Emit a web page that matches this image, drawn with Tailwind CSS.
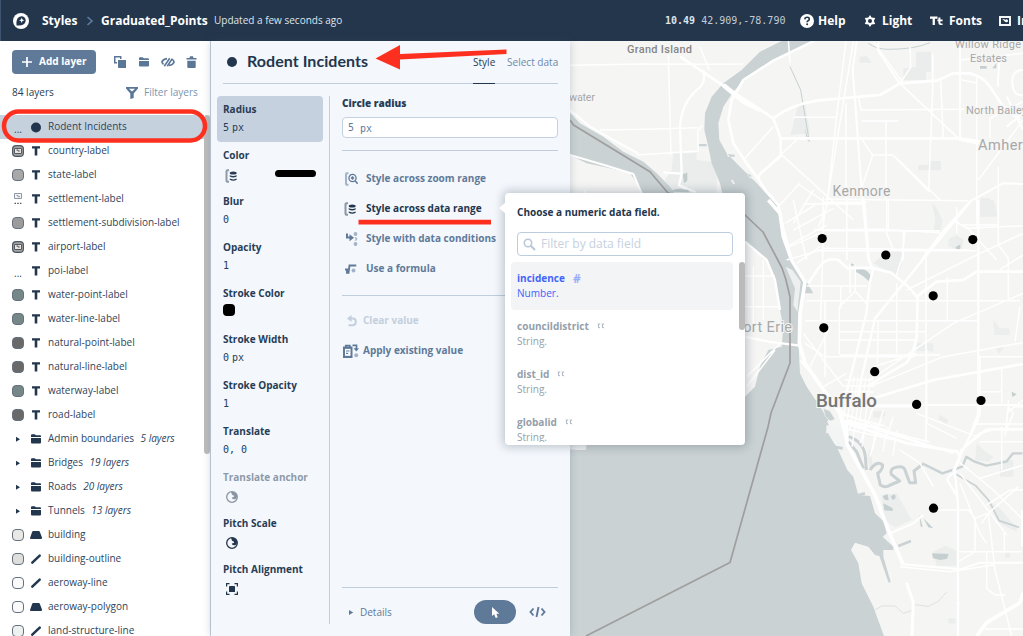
<!DOCTYPE html>
<html lang="en">
<head>
<meta charset="utf-8">
<title>Graduated_Points</title>
<script src="https://cdn.jsdelivr.net/npm/@tailwindcss/browser@4"></script>
</head>
<body class="w-[1023px] h-[636px] overflow-hidden font-['Open_Sans',sans-serif] text-[10.05px] text-[#273d56] bg-white relative">

<svg class="hidden">
  <symbol id="t" viewBox="0 0 12 12"><path d="M2 1.300h8v2.300H7.300V10.500H4.700V3.600H2z" fill="#22364d"/></symbol>
  <symbol id="folder" viewBox="0 0 12 12"><path d="M1 2.200a1 1 0 0 1 1-1h2.800l1 1H10a1 1 0 0 1 1 1V4H1zM1 5h10v4.500a1 1 0 0 1-1 1H2a1 1 0 0 1-1-1z"/></symbol>
  <symbol id="poly" viewBox="0 0 12 12"><path d="M3.300 2h5.400q.7 0 1 .6L12 8.500q.2 1.500-1 1.500H1Q-.2 10 .2 8.500L2.300 2.600q.3-.6 1-.6z" fill="#22364d"/></symbol>
  <symbol id="line" viewBox="0 0 12 12"><path d="M2.300 9.700 9.700 2.700" stroke="#22364d" stroke-width="2.500" stroke-linecap="round"/></symbol>
  <symbol id="tri" viewBox="0 0 6 6"><path d="M1 .5v5L5.200 3z"/></symbol>
  <symbol id="pic" viewBox="0 0 12 12"><rect x=".6" y=".6" width="10.800" height="10.800" rx="3.500" fill="#a2a2a2" stroke="#4c5866" stroke-width="1.200"/><path d="M2.500 3.500h7v5h-7z" fill="#e4e4e4" stroke="#5a5a5a" stroke-width="1"/><path d="M4.500 5h1.500v1h1.700" fill="none" stroke="#555"/></symbol>
  <symbol id="quote" viewBox="0 0 8 6"><path d="M.8 1h2.400M4.800 1h2.400M1.500 1v3q0 .8 1.400.6M5.500 1v3q0 .8 1.400.6" fill="none" stroke="#b3bac4" stroke-width="1.200"/></symbol>
  <symbol id="db" viewBox="0 0 12 14"><path d="M4 1.200H2.500q-1 0-1 1v9.600q0 1 1 1H4" fill="none" stroke="currentColor" stroke-opacity=".5" stroke-width="2"/><ellipse cx="8.200" cy="4" rx="3.500" ry="1.600" fill="currentColor"/><path d="M4.700 6.300q3.500 1.600 7 0v1.200q-3.500 2-7 0zM4.700 9.600q3.500 1.600 7 0v1.200q-3.500 2-7 0z" fill="currentColor"/></symbol>
  <symbol id="globe" viewBox="0 0 12 12"><circle cx="6" cy="6" r="5.300" fill="none" stroke="currentColor" stroke-width="1.300"/><path d="M5 .8Q10 0 11.300 4.500L10.500 7.500 9 8.300Q6 8.600 5.800 6.500L7.800 6 8 4.800 6 3.800z" fill="currentColor"/></symbol>
</svg>

<div class="flex flex-col w-full h-full">
  <!-- top bar -->
  <header class="h-[41px] shrink-0 bg-[#24364c] flex items-center pl-3 text-white overflow-hidden whitespace-nowrap border-l border-[#3f5470] [&>*]:shrink-0">
    <svg class="w-4 h-4" viewBox="0 0 16 16"><circle cx="8" cy="8" r="8" fill="#fff"/><path d="M3.500 12.500Q2.600 3.800 8.500 3.200A4.200 4.200 0 0 1 12.700 7.500Q12.200 13.400 3.500 12.500z" fill="#24364c"/><path d="m8.700 4.700.8 1.800 1.800.8-1.800.8-.8 1.800-.8-1.800-1.800-.8 1.800-.8z" fill="#fff"/></svg>
    <span class="ml-[13px] w-[36px] font-bold text-[12px] leading-4">Styles</span>
    <svg class="w-[8px] h-[10px] ml-[8px]" viewBox="0 0 8 10"><path d="M1.500 1 6 5 1.500 9" fill="none" stroke="#5f7c9e" stroke-width="1.600"/></svg>
    <span class="ml-[7px] w-[106px] font-bold text-[12px] leading-4">Graduated_Points</span>
    <span class="ml-[7px] w-[451px] text-[10px] text-[#dfe5ec]">Updated a few seconds ago</span>
    <span class="font-['DejaVu_Sans_Mono',monospace] text-[10px] text-[#c3ccd6] w-[135px]"><b class="text-[#dde3ea]">10.49</b> 42.909,-78.790</span>
    <svg class="w-[14px] h-[14px]" viewBox="0 0 14 14"><circle cx="7" cy="7" r="7" fill="#fff"/><path d="M4.800 5.300q.2-2 2.300-2t2.200 1.700q0 1.100-1.200 1.700Q7.100 7.200 7.100 8.300" fill="none" stroke="#24364c" stroke-width="1.600"/><circle cx="7.100" cy="10.300" r="1" fill="#24364c"/></svg>
    <b class="ml-[4px] w-[46px] text-[12px]">Help</b>
    <svg class="w-[12px] h-[12px]" viewBox="0 0 12 12"><path d="m6 0 1.600 2.500L11.200 3 9.900 6l1.300 3-3.600.5L6 12 4.400 9.500.8 9l1.300-3L.8 3l3.600-.5z" fill="#fff"/><circle cx="6" cy="6" r="2" fill="#24364c"/></svg>
    <b class="ml-[6px] w-[48px] text-[12px]">Light</b>
    <svg class="w-[13px] h-[12px]" viewBox="0 0 13 12"><path d="M0 1.500h7.500v2.300H4.900V10H2.600V3.800H0zM8.400 2.500h2v2h2.200v1.700h-2.200v1.600q0 .6.700.6h1.500V10h-2q-2.200 0-2.200-2.100V6.200h-1V4.500h1z" fill="#fff"/></svg>
    <b class="ml-[6px] w-[50px] text-[12px]">Fonts</b>
    <svg class="w-[12px] h-[12px]" viewBox="0 0 12 12"><rect x="1" y="2" width="10" height="8" fill="none" stroke="#fff" stroke-width="1.900"/><path d="M3.700 4.700h1.800v1.300h1.500" fill="none" stroke="#fff"/><circle cx="7.500" cy="5.800" r="1.500" fill="#fff"/></svg>
    <b class="ml-[6px] text-[12px]">Images</b>
  </header>

  <div class="flex flex-1 min-h-0">
    <!-- layer list -->
    <aside class="w-[211px] shrink-0 bg-white border-r border-[#c3d0e0] flex flex-col overflow-hidden whitespace-nowrap">
      <div class="flex items-center pl-3 mt-[9px] h-6 text-[#5a7797] fill-[#5a7797]">
        <div class="w-[84px] h-6 bg-[#5f7a99] rounded text-white font-bold flex items-center pl-[10px]">
          <svg class="w-[10px] h-[10px] mr-[7px]" viewBox="0 0 10 10"><path d="M5 0v10M0 5h10" stroke="#fff" stroke-width="1.700"/></svg>Add layer
        </div>
        <svg class="w-3 h-3 ml-[18px]" viewBox="0 0 12 12"><path d="M0 0h7.500v3H6V1.500H1.500V6H3v1.500H0z"/><path d="M4 4h8v8H5q-1 0-1-1z"/></svg>
        <svg class="w-3 h-3 ml-[12px]"><use href="#folder"/></svg>
        <svg class="w-[14px] h-3 ml-[11px]" viewBox="0 0 14 12"><path d="M6 2.600Q2 3 .9 6q.5 1.400 1.600 2.300M8 9.500Q12 9 13.100 6 12.600 4.600 11.500 3.700M3.300 10.200l5.400-8M6.300 10.200l5-7.600" fill="none" stroke="#5a7797" stroke-width="1.600"/></svg>
        <svg class="w-[11px] h-3 ml-[11px]" viewBox="0 0 11 12"><path d="M.5 2h3L4 .3h3L7.500 2h3v1.600H.5zM1.300 4.700h8.400V11q0 1-1 1H2.300q-1 0-1-1z"/></svg>
      </div>
      <div class="flex items-center pl-3 h-[41px] -mt-[2px]">
        <span class="w-[114px]">84 layers</span>
        <svg class="w-3 h-3 mr-[6px]" viewBox="0 0 12 12"><path d="M0 0h12v1.500L7.700 6.500V11l-3.400 1V6.500L0 1.500z" fill="#5a7797"/><path d="M3 1.800h6L6 4.500z" fill="#fff"/></svg>
        <span class="text-[#7c94af]">Filter layers</span>
      </div>
      <div class="flex flex-1 min-h-0 mt-[1.500px]">
        <ul class="w-[204px] flex flex-col text-[10px] text-[#2f445c] [&>li]:h-6 [&>li]:shrink-0 [&>li]:flex [&>li]:items-center [&>li]:pl-3 [&_svg]:w-3 [&_svg]:h-3 [&_svg]:mr-[6px] [&_svg]:fill-[#22364d] [&_i.s]:w-3 [&_i.s]:h-3 [&_i.s]:mr-[6px] [&_i.s]:rounded-[4px] [&_i.s]:border [&_i.s]:border-[#66717d] [&_em]:ml-[6.500px] [&_u]:w-[18px] [&_u]:pl-[2px] [&_u]:pt-[5px] [&_u]:no-underline">
          <li class="bg-[#c6d1de]"><u>...</u><svg viewBox="0 0 12 12"><circle cx="6" cy="6.500" r="5"/></svg>Rodent Incidents</li>
          <li><svg><use href="#pic"/></svg><svg><use href="#t"/></svg>country-label</li>
          <li><i class="s bg-[#a8a8a8]"></i><svg><use href="#t"/></svg>state-label</li>
          <li><svg viewBox="0 0 12 12"><path d="M2.500.5h7v5h-7z" fill="#f4f4f4" stroke="#8c97a6"/><path d="M4.500 2.500h1.500v1.200h2" stroke="#8c97a6" fill="none"/><path d="M2.500 10.300h1.500m1.200 0h1.500m1.200 0h1.500" stroke="#4c5866" stroke-width="1.200"/></svg><svg><use href="#t"/></svg>settlement-label</li>
          <li><i class="s bg-[#9b9b9b]"></i><svg><use href="#t"/></svg>settlement-subdivision-label</li>
          <li><svg><use href="#pic"/></svg><svg><use href="#t"/></svg>airport-label</li>
          <li><u>...</u><svg><use href="#t"/></svg>poi-label</li>
          <li><i class="s bg-[#76878a]"></i><svg><use href="#t"/></svg>water-point-label</li>
          <li><i class="s bg-[#76878a]"></i><svg><use href="#t"/></svg>water-line-label</li>
          <li><i class="s bg-[#696969]"></i><svg><use href="#t"/></svg>natural-point-label</li>
          <li><i class="s bg-[#696969]"></i><svg><use href="#t"/></svg>natural-line-label</li>
          <li><i class="s bg-[#76878a]"></i><svg><use href="#t"/></svg>waterway-label</li>
          <li><i class="s bg-[#696969]"></i><svg><use href="#t"/></svg>road-label</li>
          <li><svg viewBox="0 0 12 12"><path d="M4 3.700v5l4-2.500z"/></svg><svg><use href="#folder"/></svg>Admin boundaries<em>5 layers</em></li>
          <li><svg viewBox="0 0 12 12"><path d="M4 3.700v5l4-2.500z"/></svg><svg><use href="#folder"/></svg>Bridges<em>19 layers</em></li>
          <li><svg viewBox="0 0 12 12"><path d="M4 3.700v5l4-2.500z"/></svg><svg><use href="#folder"/></svg>Roads<em>20 layers</em></li>
          <li><svg viewBox="0 0 12 12"><path d="M4 3.700v5l4-2.500z"/></svg><svg><use href="#folder"/></svg>Tunnels<em>13 layers</em></li>
          <li><i class="s bg-[#e8e8e7]"></i><svg><use href="#poly"/></svg>building</li>
          <li><i class="s bg-[#dededc]"></i><svg><use href="#line"/></svg>building-outline</li>
          <li><i class="s bg-[#fafafa]"></i><svg><use href="#line"/></svg>aeroway-line</li>
          <li><i class="s bg-[#fafafa]"></i><svg><use href="#poly"/></svg>aeroway-polygon</li>
          <li><i class="s bg-[#edf1f0]"></i><svg><use href="#line"/></svg>land-structure-line</li>
        </ul>
        <div class="w-[6px] h-[339px] bg-[#bdbdbd] rounded-[3px]"></div>
      </div>
    </aside>

    <!-- property panel -->
    <section class="w-[359px] shrink-0 bg-[#f4f7fc] flex flex-col whitespace-nowrap z-10 shadow-[0_0_8px_rgba(60,80,100,0.25)]">
      <div class="ml-3 mr-3 h-[43px] border-b border-[#bfcddc] flex items-center [&>*]:shrink-0">
        <i class="w-[10px] h-[10px] rounded-full bg-[#22364d] ml-1 mr-[10px]"></i>
        <span class="font-[Lato,sans-serif] font-bold text-[16px] text-[#22364d] w-[226px] -mt-[2px] tracking-[0.050px]">Rodent Incidents</span>
        <span class="h-[43px] mt-px border-b border-[#22364d] leading-[42px] w-[22px]">Style</span>
        <span class="ml-3 mt-[2px] text-[#6f89a8]">Select data</span>
      </div>
      <div class="flex pt-3 h-[540px]">
        <div class="ml-[6px] w-[113px] border-r border-[#c3cfdd] flex flex-col [&>div]:w-[106px] [&>div]:h-[46px] [&>div]:pl-[6px] [&>div]:pt-[6px] [&_b]:block [&_b]:leading-[14px] [&_b]:text-[10px] [&_b]:text-[#273d56] [&_p]:h-[22px] [&_p]:flex [&_p]:items-center [&_p]:font-['DejaVu_Sans_Mono',monospace] [&_p]:text-[10px]">
          <div class="bg-[#c6d1df] rounded"><b>Radius</b><p>5<span class="ml-[3px]">px</span></p></div>
          <div><b>Color</b><p><svg class="w-3 h-[14px] ml-[2px] mt-[6px]"><use href="#db"/></svg><i class="w-[41px] h-[7px] bg-black rounded-full ml-[38px]"></i></p></div>
          <div><b>Blur</b><p>0</p></div>
          <div><b>Opacity</b><p>1</p></div>
          <div><b>Stroke Color</b><p><i class="w-3 h-3 bg-black rounded-[4px] -mt-[2px]"></i></p></div>
          <div><b>Stroke Width</b><p>0<span class="ml-[3px]">px</span></p></div>
          <div><b>Stroke Opacity</b><p>1</p></div>
          <div><b>Translate</b><p>0, 0</p></div>
          <div class="opacity-50"><b>Translate anchor</b><p><svg class="w-3 h-3 ml-[3px] mt-[3px] text-[#22364d]"><use href="#globe"/></svg></p></div>
          <div><b>Pitch Scale</b><p><svg class="w-3 h-3 ml-[3px] mt-[3px] text-[#22364d]"><use href="#globe"/></svg></p></div>
          <div><b>Pitch Alignment</b><p><svg class="w-3 h-3 ml-[3px] mt-[3px]" viewBox="0 0 12 12"><path d="M.6 3.500V.6h2.900M8.500.6h2.900v2.900M11.400 8.500v2.900H8.500M3.500 11.400H.6V8.500" fill="none" stroke="#22364d" stroke-width="1.200"/><rect x="3" y="3" width="6" height="6" rx=".6" fill="#22364d"/></svg></p></div>
        </div>
        <div class="ml-3 w-[216px] flex flex-col text-[10px] text-[#5f7a99] font-bold">
          <b class="leading-[14px] text-[#273d56]">Circle radius</b>
          <div class="mt-[7px] h-[21px] bg-white border border-[#c3d1e1] rounded flex items-center pl-[5px] font-normal font-['DejaVu_Sans_Mono',monospace] text-[10px]">5<span class="ml-[6px] mt-px">px</span></div>
          <div class="mt-3 h-[13px] border-t border-[#bfcddc]"></div>
          <div class="h-[30px] pt-px flex items-center pl-[3px]"><svg class="w-[13px] h-[14px] mr-2" viewBox="0 0 13 14"><path d="M3.500 1.200H2q-1 0-1 1v9.600q0 1 1 1h1.500" fill="none" stroke="#a3b4c8" stroke-width="2"/><circle cx="7.500" cy="6" r="3.600" fill="#f4f7fc" stroke="#5f7a99" stroke-width="1.300"/><path d="M7.500 4.300v3.400M5.800 6h3.400M10 8.800l2.700 3" stroke="#5f7a99" stroke-width="1.500"/></svg>Style across zoom range</div>
          <div class="h-[30px] pt-px flex items-center pl-[2px] text-[#22364d]"><svg class="w-3 h-[14px] mr-[10px]"><use href="#db"/></svg>Style across data range</div>
          <div class="h-[30px] pt-px flex items-center pl-[3px]"><svg class="w-[13px] h-[14px] mr-2" viewBox="0 0 13 14"><path d="M2 1.500v4h3.500" fill="none" stroke="#5f7a99" stroke-width="2"/><path d="M4.500 2.300 9 5.800 4.500 9.300z" fill="#5f7a99"/><circle cx="10.500" cy="2" r="1.900" fill="#a3b4c8"/><path d="M9.500 5q2.800 0 2.800 1.900t-2.800 1.900l1.200-1.900z" fill="#a3b4c8"/><circle cx="10.500" cy="12" r="1.900" fill="#a3b4c8"/></svg>Style with data conditions</div>
          <div class="h-[30px] pt-px flex items-center pl-[3px]"><svg class="w-[13px] h-[14px] mr-2" viewBox="0 0 13 14"><path d="M0 7.500h2v3.300h1.500l1-7.300h6.700" fill="none" stroke="#5f7a99" stroke-width="1.900"/><circle cx="8.500" cy="8.500" r="2" fill="#a3b4c8"/></svg>Use a formula</div>
          <div class="mt-3 h-[10px] border-t border-[#bfcddc]"></div>
          <div class="h-[30px] pt-px flex items-center pl-[5px] text-[#c3cfdd]"><svg class="w-[10px] h-3 mr-[6px]" viewBox="0 0 10 12"><path d="M2 3.500h4q2.800 0 2.800 3.200T6 10.200H1.500" fill="none" stroke="#c3cfdd" stroke-width="1.900"/><path d="M4.500 0v7L0 3.500z" fill="#c3cfdd"/></svg>Clear value</div>
          <div class="h-[30px] pt-px flex items-center pl-px"><svg class="w-4 h-[14px] mr-1" viewBox="0 0 16 14"><path d="M0 2.500h9.500V14H0z" fill="#5f7a99"/><path d="M2 4.800h5.500v7H2z" fill="#fff"/><path d="M3 7h3.500M3 9.300h2.200" stroke="#5f7a99" stroke-width="1.200"/><path d="M2.800 1.500h4v2h-4zM9.500 1.300h4V5" stroke="#5f7a99" stroke-width="1.700" fill="none"/><path d="M10.500 4.300H16l-2.700 3.200z" fill="#5f7a99"/><circle cx="13.200" cy="11.300" r="2" fill="#a3b4c8"/></svg>Apply existing value</div>
          <div class="mt-auto h-[13px] border-t border-[#bfcddc]"></div>
          <div class="h-6 flex items-center font-normal"><svg class="w-[6px] h-[7px] ml-[6px] mr-[6px] fill-[#5f7a99]"><use href="#tri"/></svg><span class="w-[114px] pt-px">Details</span>
            <div class="w-[42px] h-6 rounded-full bg-[#5f7a99] flex items-center justify-center"><svg class="w-[9px] h-[11px]" viewBox="0 0 9 11"><path d="M1 0v9l2.200-1.800L4.700 11l2-.8-1.300-3.500H8.300z" fill="#fff"/></svg></div>
            <svg class="w-[17px] h-3 ml-[13px]" viewBox="0 0 17 12"><path d="M4.500 2.500 1.500 6l3 3.500M12.500 2.500l3 3.500-3 3.500M9.500 1l-2 10" fill="none" stroke="#5f7a99" stroke-width="1.900"/></svg>
          </div>
        </div>
      </div>
    </section>

    <!-- map -->
    <main class="flex-1 min-w-0">
      <svg class="block w-[453px] h-[595px]" viewBox="570 41 453 595">
        <path d="M570 41h453v595H570z" fill="#f5f5f4"/>
        <!-- parks and built-up ground -->
        <g transform="translate(560 40) scale(.33333)">
          <g fill="#eaedec"><path d="M1068 35h45v60h-15v25h-68v-35l38-5zM900 50l20-2 16 20h-38zM715 190h20l15 90-58 5zM340 340h70v20l45 5 15 30v65H330l-15-40 20-30zM1075 375h30v-12h38v28h-68zM1115 485l30 55-5 35-18-5 5-30zM1262 475h25l20 20v30h-45zM1170 595l20-10 20 15-5 25h-30zM990 632l25-10 15 38h-60z"/></g>
          <path d="M665 3 600 35 545 90 490 130 455 170 435 220 433 270 445 320 455 370 480 430 487 460 480 760H760L690 640 668 600 665 540 650 495 590 430 540 380 500 340 478 300 475 250 490 200 520 155 560 115 640 60 760 3zM20 208l40 42 70 40 60 45 60 30 40 35 40 40 20 30H250l-15-35-25-35-60-15-70-15-60-30zM415 312h25v7h-25zM500 342l24 2v6h-20zM560 400l14 6-2 12z" fill="#cad2d3"/>
          <path d="M330 455q20-15 45-5l12-8v15zM368 402l14-4v24l-10 8z" fill="#c2cccd"/>
          <path d="m565 495 20 25M590 500v18M515 420l8 12" stroke="#f5f5f4" stroke-width="5" fill="none"/>
          <path d="m690 80 32 70 10 60 16 95M925 10q25 18 60 18 80 0 125-20" stroke="#c6d0d1" stroke-width="3" fill="none"/>
          <path d="m735 265 12 40-8-10zM1260 78h20v8h-20zM1297 85l12-15v15zM1187 622l14-8v12l-12 6z" fill="#c5cfd0"/>
        </g>
        <g transform="translate(740 200) scale(.33333)">
          <path d="m400 190 45-40 40-2v50l-20 35-30-22zM583 10l25 50-5 30-20-10 5-30zM720 0h40l15 50h-55zM625 118l25-8v30h-25zM530 430h50v24h-50zM760 360l20 25h28v20h-45zM765 440h28l-15 22zM600 645l25 15-5 12-25-14zM400 635h30v18h-30zM45 300h45v14H45zM780 780h40v50h-40z" fill="#ebeeed"/>
          <path d="M0 0H85L120 40 130 110 150 170 190 250 180 330 175 420 180 520 200 560 240 620 260 660 285 720H0z" fill="#cad2d3"/>
          <path d="M0 110 15 125 80 180 105 240 120 330 130 380 125 440 85 450 60 500 45 560 15 590 0 600z" fill="#f5f5f4"/>
          <path d="m137 200 20 10 25 35-10 90-12-20 5-50z" fill="#eef0ef"/>
          <path d="M347 206q30-5 45 20l-5 18q-20-20-40-28zM335 190l10 6-15 2zM648 140l12-6v10l-10 6zM815 575l15 8-13 8z" fill="#c5cfd0"/>
        </g>
        <g transform="translate(560 400) scale(.33333)">
          <path d="M30 0H770L780 20 805 60 790 75 800 100 830 140 862 210 880 230 895 285 930 288 945 340 972 365 980 400 968 410 1000 440V450H970V470L992 545 986 548 958 468 945 465 925 440 885 428 873 450 895 490 905 550 940 620 972 708H30z" fill="#cad2d3"/>
          <path d="M30 148 50 150 78 150 82 110 30 100z" fill="#eef0ef"/>
          <path d="m965 285 45-5 45 80-50 22-35-25zM1120 455l35-18 35 15v45h-60zM1280 300l40 25 50 60v10l-50-25zM1250 130l20 20 30 20-15 15-40-5zM945 33h30v15h-30zM1140 45l25 15-5 10-25-12zM1165 655h22v15h-22zM1335 458h15v15h-15zM930 140l8 50-8 15-8-30z" fill="#ebeeed"/>
          <path d="m800 75 40 8 18 50-10 30-50-65z" fill="#f3f4f4"/>
          <g fill="none" stroke="#cad2d3" stroke-width="9" stroke-linejoin="round"><path d="M866 110q45 15 50 60l3 40M865 125l25 30 20 50M930 210q20-30 38-15 0 15-15 25l8 35q15 10 30 0l28-12-25-20q-5-15 10-20 25-8 30 5l15 40h18l-5-35 25-20" /><path d="m1087 190 60 30 60-20 12-30 25 15 35 12 60-12 20-25h28" stroke-width="7"/><path d="m1187 222 60 35 40 45 30 60 60 20" stroke-width="5"/><path d="m1015 438 38-15M800 100l20 35M818 140l30 5M895 285l20-5" stroke-width="8"/></g>
          <path d="m1116 460 50 2-5 14-20 4-22-5zM968 288l15-5 3 18-12-2zM993 288l12-5 2 12-10 5zM970 310l10 5 18 10v8l-25-2zM1078 345l10 35h-6zM1090 355l30 30-15-3z" fill="#c5cfd0"/>
          <path d="m945 630 20-12h40l25 22 25-8 10-18 40 5 30-15 25-28" fill="none" stroke="#dadddc" stroke-width="2.500"/>
          <path d="M790 25l20 8 15 25-15 5-15-15z" fill="#cad2d3" stroke="#eef1f1" stroke-width="2"/>
        </g>
        <!-- minor roads -->
        <g fill="none" stroke="#fff" stroke-width="4.500">
          <g transform="translate(560 40) scale(.33333)">
            <path d="M30 76 250 72 440 73 550 72M325 45l8 300M420 20l28 70M120 270 260 268l155-5M230 345l185-12-2-60 15-18M75 450v10M880 4l-92 560M858 4 832 210 800 500 775 560M690 70 685 0M640 260 550 360M710 300 600 400M660 340 880 540M700 232h130M720 430l-70 75M760 450l-60 100M715 432l80 55H910M795 478l430 4M895 170l8 40 310-2M905 243h110M1050 20l2 62-30 45M978 245v235M900 290l38 55-35 105M938 345h60l110 110M1005 350l135 130M1118 40v110l-12 300M858 190v280M1150 300l-8-180M1250 110v450M1315 380v220M1198 300l60 12 130 8M1255 420l134-180M1020 130l175 165M1030 130 940 5M1205 120l42 8M860 470v190M985 480v90M700 570l120-65M790 470v90M680 620l120-65M760 570 960 568l180 10M1030 570v90M680 660l120-35 430 5M1180 540l40 25 170-8M1220 560l90 100M1200 60l190-20M1290 295v-60l99-50M1190 500v80"/>
          </g>
          <g transform="translate(740 200) scale(.33333)">
            <path d="M40 200v200M15 228h90M15 320h100M70 180v180M20 530l100-100M20 560l85-110M250 0v110l-8 250M160 0l40 180M135 70l90-55M150 140l90-40M170 190l70-50M190 12h180M250 10l130-3M250 92h350M240 152h470M320 0v180M440 0v100l20 50M495 92l-8 80-20 60M200 258h180M200 302h640M195 362h518M298 395h260M300 420h230M300 465h300M298 465V320l48-46 38 42M346 274v-80M330 190v90M302 256v70M415 360l-3 130M558 150v570M622 230v135M470 250v210M195 430l60 40h270M190 400l120 160M180 480l140 170M250 560l70-40M400 500l130-40M390 540 640 370l209-90M390 560l220-90 239-42M560 615h289M560 450v200M530 640l180 70M400 620h130M849 100 720 160 500 270M645 60l20 15h110V0M775 75v60l30 40v120M849 165l-70 45M840 320l-15 105M850 470H720v180M785 500v110M715 575h70M805 620l-10 90M820 620h29M210 500l60-120M255 300v230M849 600l-50 40"/>
          </g>
          <g transform="translate(560 400) scale(.33333)">
            <path d="M865 15h500M850 40l150 60 180 60M1100 70v-60M930 170l40-140M900 130 940 20M980 110l20-60M950 90l200 60M1020 150l60 40 40 70M1100 70l90 45M1250 72h139M1260 125h129M1325 80v130M1345 0v20l15 20-25 60M1200 220l50 65 90 120M1200 250l60 150 20 30M1260 235l130-40M1230 330h-120M1245 355v100l-50 30M1285 340l20 170 50 198M1280 315l70-45h39M1195 455h190M1280 455v110l25 20h30M1275 687h114M1333 395v60M1265 370l20-30 90-80M1200 610h-10M1195 330h30l20 25 35-15M1190 180l110 90 90 90M1020 500l150 15 130-20"/>
          </g>
        </g>
        <!-- street grid in the city centre -->
        <g fill="none" stroke="#fff" stroke-width="1.300"><path d="m850 376-8 50m12-49-8 50m12-50-8 52m12-52-8 54m12-54-8 55m12-54-6 52M845 380h28m-29 6h30m-31 6h30m-32 15h30m-31 7 45 12m-45-6 90 22m-84-13 80 18m-70-28-4 28m14-26-4 26m14-24-3 26m14-22-4 25m14-22-4 26"/></g>
        <!-- major roads -->
        <g fill="none" stroke="#fff" stroke-width="8" stroke-linejoin="round">
          <g transform="translate(560 40) scale(.33333)">
            <path d="M360 50 480 130 640 235 662 295H1200L1260 305" stroke-width="8"/><path d="M490 135 550 185 600 210" stroke-width="14"/>
            <path d="M640 235q50-40 130-53l130-12 60-5 60-35 110-8 50-22h50q40 10 60 40l40 60 50 40"/>
            <path d="M762 3 640 62 550 120 515 180 505 240 520 310 560 370 590 410 620 455 655 495 668 560 690 640"/>
            <path d="M430 90q10 40-20 60-45 40-50 110l5 140M310 397l55 4-8 35 50 20M662 295v55l-60 50-10 20" stroke-width="7"/>
            <path d="M890 3 878 90 885 180 905 450 925 660M955 3v30l62 95M1200 3v295M1340 170l49 100M1389 220l-49 40M1389 90q-35 0-32 40t32 35M1318 60l-5 80M1389 432l-60-2-100 55-85 95-60 80M30 210l60 50 70 40 75 40M30 345l110 32 80 25 25 58" stroke-width="6"/>
          </g>
          <g transform="translate(740 200) scale(.33333)">
            <path d="M85 0 120 40 130 110 155 180 195 245 180 340 178 430 195 490 300 640 320 720" stroke-width="11"/>
            <path d="m205 250 30-45q20-35 60-25l28 25 70-2 60 15 50 40 30 35-3 120q-10 50-30 75l-60 35-55 35"/>
            <path d="m530 290 60-45 80-5 40-25h139M400 595l180-55 269-48" stroke-width="8"/>
            <path d="m15 410 70 15 95 12M15 125l65 55 25 60 15 90" stroke-width="7"/>
            <path d="m372 0 15 180 12 30-10 40-10 90-60 240M695 0 540 190 405 355 350 600M715 0v640l-30 80M320 660l180 50M849 688H740l-40 32" stroke-width="7"/>
          </g>
          <g transform="translate(560 400) scale(.33333)">
            <path d="m858 60 2 70 85 155 40 105 45 105" stroke-width="11"/><path d="m1040 548 20 60-4 100M862 70l180 60 150 25 8 15-20 45" stroke-width="9"/>
            <path d="M1254 0v60l-50 100-20 50 10 100v398M1200 155l60-55 40-12h89M1190 215q-25 10-28 25l30 50" stroke-width="7"/>
            <path d="M1250 708l30-40 100-60 9-30M1389 330v110" stroke-width="11"/>
            <path d="m990 400 70-30 30-25M1030 493l170 15 60-20h129" stroke-width="6"/>
          </g>
        </g>
        <!-- national border -->
        <g fill="none" stroke="#a09e9f" stroke-width="1.700" stroke-linejoin="round"><path d="M570 120 573.500 125 650 171.700 668 193 745 215 763 232 782 268 786 280 790 297V363L771 413 768 427 730 562.500 586 636"/></g>
        <!-- place labels -->
        <g font-family="Roboto, sans-serif" stroke="#f5f5f4" stroke-width="2" paint-order="stroke" fill="#a8a8a8">
          <text x="627" y="53" font-size="11" fill="#858585" font-weight="500" textLength="65">Grand Island</text>
          <text x="569" y="101" font-size="11" textLength="26">water</text>
          <text x="955" y="48" font-size="11" textLength="66">Willow Ridge</text>
          <text x="970" y="61.500" font-size="11" textLength="37">Estates</text>
          <text x="966" y="114" font-size="11" textLength="61">North Bailey</text>
          <text x="978" y="149.500" font-size="14.500" textLength="58">Amherst</text>
          <text x="832.500" y="195.500" font-size="14" textLength="58">Kenmore</text>
          <text x="735" y="332" font-size="14.500" textLength="57">Fort Erie</text>
          <text x="816" y="406.500" font-size="19" fill="#757575" font-weight="500" textLength="61" lengthAdjust="spacingAndGlyphs">Buffalo</text>
        </g>
        <g><circle cx="822.200" cy="238.500" r="4.600"/><circle cx="885.800" cy="255" r="4.600"/><circle cx="972.800" cy="239.600" r="4.600"/><circle cx="933.200" cy="295.800" r="4.600"/><circle cx="823.800" cy="327.800" r="4.600"/><circle cx="874.700" cy="371.700" r="4.600"/><circle cx="916.600" cy="404.400" r="4.600"/><circle cx="981" cy="400.500" r="4.600"/><circle cx="933.500" cy="508.200" r="4.600"/></g>
      </svg>
    </main>
  </div>
</div>

<!-- data field popover -->
<div class="absolute left-[505px] top-[193px] w-[240px] h-[252px] bg-white rounded z-20 shadow-[0_0_10px_2px_rgba(40,60,80,0.28)] whitespace-nowrap">
  <svg class="absolute -left-[6px] top-[9px] w-[7px] h-3" viewBox="0 0 7 12"><path d="M7 0v12L0 6z" fill="#fff"/></svg>
  <div class="flex flex-col h-[249px] overflow-hidden">
    <b class="ml-3 mt-3 leading-[15px] text-[#22364d]">Choose a numeric data field.</b>
    <div class="mx-3 mt-3 h-6 shrink-0 border border-[#bccde0] rounded flex items-center text-[12px] text-[#c6d1df]"><svg class="w-[13px] h-[13px] ml-[5px] mr-[5px]" viewBox="0 0 13 13"><circle cx="5" cy="5" r="3.700" fill="none" stroke="#b9c7d8" stroke-width="1.600"/><path d="m8 8 4 4" stroke="#b9c7d8" stroke-width="2.200"/></svg>Filter by data field</div>
    <div class="flex mt-[6px] pl-[6px]">
      <div class="w-[222px] text-[#959fab] [&>div]:h-12 [&>div]:pl-[6px] [&>div]:pt-[9px] [&>div]:leading-[15px] [&>div]:rounded [&_svg]:inline-block [&_svg]:w-[8px] [&_svg]:h-[6px] [&_svg]:ml-2 [&_svg]:mb-[3px]">
        <div class="bg-[#f3f4f6] text-[#4264fb]"><p class="flex h-[15px]"><b>incidence</b><b class="ml-2 text-[#9badf8] text-[12px]">#</b></p>Number.</div>
        <div><b>councildistrict</b><svg><use href="#quote"/></svg><br>String.</div>
        <div><b>dist_id</b><svg><use href="#quote"/></svg><br>String.</div>
        <div><b>globalid</b><svg><use href="#quote"/></svg><br>String.</div>
      </div>
      <div class="ml-[6px] w-[6px] h-[68px] rounded-[3px] bg-[#bbb]"></div>
    </div>
  </div>
</div>

<!-- red annotations -->
<svg class="absolute left-0 top-0 w-[1023px] h-[636px] z-30 pointer-events-none" viewBox="0 0 1023 636">
  <rect x="4" y="111.500" width="201" height="29" rx="14.500" fill="none" stroke="#fd3020" stroke-width="4.500"/>
  <path d="M375.500 58.500 400 45v9l106.500-4.500v4.500L400 59.500V69.500z" fill="#fd3020"/>
  <path d="M358.500 219.700H491v4.800H358.500z" fill="#fd3020"/>
</svg>
</body>
</html>
